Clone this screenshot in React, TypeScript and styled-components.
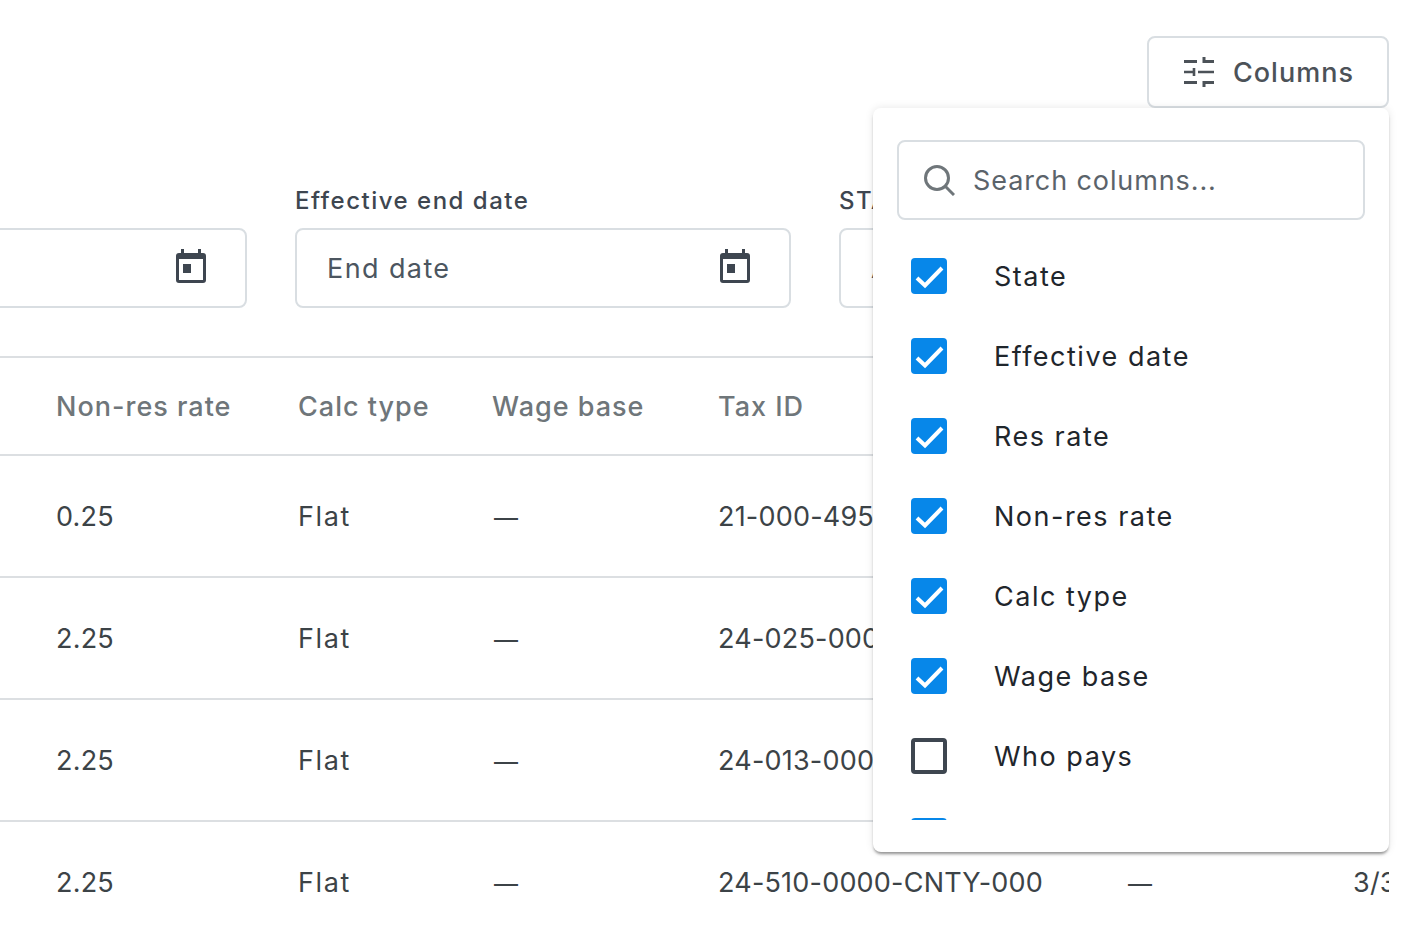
import React from 'react';
import styled, { createGlobalStyle } from 'styled-components';

const columns = [
  { name: 'State', checked: true },
  { name: 'Effective date', checked: true },
  { name: 'Res rate', checked: true },
  { name: 'Non-res rate', checked: true },
  { name: 'Calc type', checked: true },
  { name: 'Wage base', checked: true },
  { name: 'Who pays', checked: false },
  { name: 'Tax ID', checked: true },
];

const rows = [
  { rate: '0.25', calc: 'Flat', wage: '—', taxId: '21-000-4950', extra: '', date: '' },
  { rate: '2.25', calc: 'Flat', wage: '—', taxId: '24-025-0000', extra: '', date: '' },
  { rate: '2.25', calc: 'Flat', wage: '—', taxId: '24-013-0000', extra: '', date: '' },
  { rate: '2.25', calc: 'Flat', wage: '—', taxId: '24-510-0000-CNTY-000', extra: '—', date: '3/31/2024' },
];

const GlobalStyle = createGlobalStyle`
  html, body {
    margin: 0;
    background: #fff;
    overflow: hidden;
  }
  body {
    font-family: 'Inter', 'Liberation Sans', sans-serif;
    color: #3e4650;
  }
`;

const Page = styled.div`
  position: relative;
  width: 1422px;
  height: 938px;
  overflow: hidden;
  background: #fff;
`;

const Content = styled.div`
  width: 1389px;
  height: 938px;
  overflow: hidden;
`;

const Toolbar = styled.div`
  display: flex;
  justify-content: flex-end;
  padding-top: 36px;
  height: 72px;
`;

const ColumnsButton = styled.button`
  box-sizing: border-box;
  display: flex;
  align-items: center;
  gap: 19px;
  width: 242px;
  height: 72px;
  padding: 0 0 0 35px;
  border: 2px solid #d9dee2;
  border-radius: 8px;
  background: #fff;
  color: #4c5258;
  font: 500 27px 'Inter', sans-serif;
  letter-spacing: 1px;
`;

const Filters = styled.div`
  display: flex;
  gap: 48px;
  margin-left: -249px;
  padding-top: 76px;
`;

const Field = styled.div`
  flex: none;
  width: 496px;
`;

const FieldLabel = styled.div`
  height: 44px;
  font-size: 24px;
  line-height: 34px;
  font-weight: 500;
  letter-spacing: 1.5px;
  white-space: nowrap;
`;

const DateBox = styled.div`
  box-sizing: border-box;
  display: flex;
  align-items: center;
  justify-content: space-between;
  height: 80px;
  padding: 0 39px 0 30px;
  border: 2px solid #d9dee2;
  border-radius: 8px;
  font-size: 27px;
  letter-spacing: 1.4px;
  color: #4c5660;

  svg {
    margin-bottom: 4px;
  }
`;

const Table = styled.div`
  margin-top: 48px;
  margin-left: -249px;
  border-top: 2px solid #dcdfe2;
`;

const Row = styled.div<{ $head?: boolean }>`
  display: grid;
  grid-template-columns: 547px 194px 226px 408px 227px 300px;
  box-sizing: border-box;
  height: ${p => (p.$head ? '98px' : '122px')};
  align-items: center;
  border-bottom: 2px solid #dcdfe2;
  color: ${p => (p.$head ? '#6f767a' : '#3c4347')};
  font-size: 27px;
  font-weight: ${p => (p.$head ? 500 : 400)};
  letter-spacing: ${p => (p.$head ? '1px' : '1.6px')};
  white-space: nowrap;
`;

const Cell = styled.div`
  &:first-child {
    padding-left: 305px;
  }
`;

// digits of the fallback font run wider than the rest of the text
const NumberCell = styled(Cell)`
  letter-spacing: 0.2px;
`;

const Dash = styled.span`
  margin-left: 2px;
  font-size: 24px;
  letter-spacing: 0;
`;

const Panel = styled.div`
  position: absolute;
  top: 108px;
  left: 873px;
  box-sizing: border-box;
  width: 516px;
  height: 744px;
  padding: 32px 24px;
  background: #fff;
  border-radius: 8px;
  box-shadow: 0 3px 3px -1px rgba(0, 0, 0, 0.4), 0 0 8px rgba(0, 0, 0, 0.1);
`;

const SearchBox = styled.div`
  box-sizing: border-box;
  display: flex;
  align-items: center;
  gap: 18px;
  height: 80px;
  padding-left: 24px;
  border: 2px solid #d9dee2;
  border-radius: 8px;
  font-size: 27px;
  letter-spacing: 0.9px;
  color: #5b636a;
`;

const List = styled.div`
  box-sizing: border-box;
  height: 600px;
  padding-top: 16px;
  overflow: hidden;
`;

const Option = styled.div`
  display: flex;
  align-items: center;
  height: 80px;
  padding-left: 14px;
  font-size: 27px;
  letter-spacing: 1.5px;
  color: #1f262c;
`;

const Check = styled.span<{ $on: boolean }>`
  box-sizing: border-box;
  display: flex;
  flex: none;
  width: 36px;
  height: 36px;
  margin-right: 47px;
  border-radius: 4px;
  background: ${p => (p.$on ? '#0787e9' : '#fff')};
  border: ${p => (p.$on ? 'none' : '4px solid #3e4650')};
`;

const SlidersIcon = () => (
  <svg width="30" height="30" viewBox="0 0 30 30" fill="none" stroke="#4c5258" strokeWidth="3">
    <path d="M0 4.5h13M19 4.5h11M20 0v6M0 25.5h13M19 25.5h11M20 24v6" />
    <path d="M0 15h11M14 15h16M10 11v8" strokeWidth="2.6" />
  </svg>
);

const CalendarIcon = () => (
  <svg width="30" height="34" viewBox="0 0 30 34" fill="#3e4650">
    <path
      fillRule="evenodd"
      d="M5 0h3v4h14V0h3v4h2a3 3 0 0 1 3 3v24a3 3 0 0 1-3 3H3a3 3 0 0 1-3-3V7a3 3 0 0 1 3-3h2zM3 10v21h24V10z"
    />
    <rect x="7" y="15" width="8" height="9" />
  </svg>
);

const SearchIcon = () => (
  <svg width="32" height="32" viewBox="0 0 32 32" fill="none" stroke="#6f767a" strokeWidth="3">
    <circle cx="14" cy="14" r="11.5" />
    <path d="M22 22l9 9" />
  </svg>
);

const CheckMark = () => (
  <svg width="36" height="36" viewBox="0 0 36 36" fill="none" stroke="#fff" strokeWidth="4">
    <path d="M6 20l8 7.5L31 10" />
  </svg>
);

export default function App() {
  return (
    <Page>
      <GlobalStyle />
      <Content>
        <Toolbar>
          <ColumnsButton>
            <SlidersIcon />
            Columns
          </ColumnsButton>
        </Toolbar>
        <Filters>
          <Field>
            <FieldLabel />
            <DateBox>
              <span />
              <CalendarIcon />
            </DateBox>
          </Field>
          <Field>
            <FieldLabel>Effective end date</FieldLabel>
            <DateBox>
              End date
              <CalendarIcon />
            </DateBox>
          </Field>
          <Field>
            <FieldLabel>STATE</FieldLabel>
            <DateBox>All</DateBox>
          </Field>
        </Filters>
        <Table>
          <Row $head>
            <Cell>Non-res rate</Cell>
            <Cell>Calc type</Cell>
            <Cell>Wage base</Cell>
            <Cell>Tax ID</Cell>
          </Row>
          {rows.map(row => (
            <Row key={row.taxId}>
              <NumberCell>{row.rate}</NumberCell>
              <Cell>{row.calc}</Cell>
              <Cell>
                <Dash>{row.wage}</Dash>
              </Cell>
              <NumberCell>{row.taxId}</NumberCell>
              <Cell>
                <Dash>{row.extra}</Dash>
              </Cell>
              <NumberCell>{row.date}</NumberCell>
            </Row>
          ))}
        </Table>
      </Content>
      <Panel>
        <SearchBox>
          <SearchIcon />
          Search columns...
        </SearchBox>
        <List>
          {columns.map(col => (
            <Option key={col.name}>
              <Check $on={col.checked}>{col.checked && <CheckMark />}</Check>
              {col.name}
            </Option>
          ))}
        </List>
      </Panel>
    </Page>
  );
}
